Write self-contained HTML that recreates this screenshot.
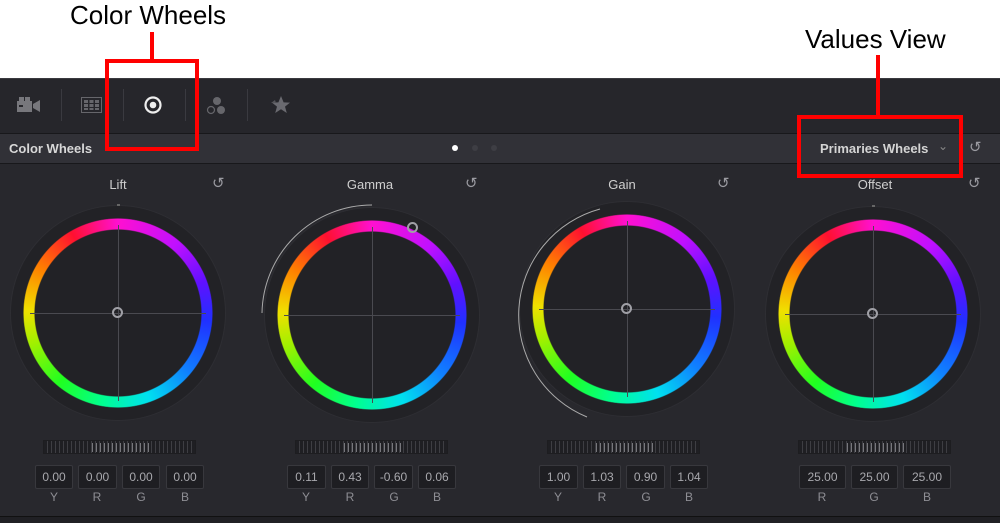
<!DOCTYPE html>
<html><head><meta charset="utf-8"><style>
*{margin:0;padding:0;box-sizing:border-box}
body{width:1000px;height:523px;background:#fff;position:relative;overflow:hidden;font-family:"Liberation Sans",sans-serif}
.a{position:absolute}
.tb{left:0;top:78px;width:1000px;height:55px;background:#26262b;border-top:1px solid #3a3a3f}
.hd{left:0;top:133px;width:1000px;height:31px;background:#313137;border-top:1px solid #18181b;border-bottom:1px solid #18181b}
.bd{left:0;top:164px;width:1000px;height:352px;background:#28282d}
.bot{left:0;top:516px;width:1000px;height:7px;background:#202024;border-top:1px solid #111}
.sep{width:1px;height:32px;top:89px;background:#3a3a40}
.ttl{color:#cfcfcf;font-size:13px;text-align:center;width:120px}
.wo{border-radius:50%;background:#222226;box-shadow:0 0 0 1px #2e2e33}
.ring{border-radius:50%;background:conic-gradient(#ff10d0 0deg,#c010ff 40deg,#6010ff 70deg,#2030ff 95deg,#1080ff 130deg,#00e0f0 160deg,#00ff90 190deg,#20ff20 220deg,#a0f000 250deg,#f0e000 272deg,#ff8000 300deg,#ff1030 330deg,#ff10d0 360deg);-webkit-mask:radial-gradient(circle,transparent 83px,#000 84px,#000 94px,transparent 95px);mask:radial-gradient(circle,transparent 83px,#000 84px,#000 94px,transparent 95px)}
.ch{background:#4a4a50}
.dot{width:11px;height:11px;border:2px solid #a0a0a6;border-radius:50%}
.sl{height:14px;background:#1f1f23 repeating-linear-gradient(90deg,#1f1f23 0 3px,#3e3e43 3px 4px);border:1px solid #1d1d20}
.sl::after{content:"";position:absolute;left:30%;width:40%;top:2px;height:9px;background:repeating-linear-gradient(90deg,transparent 0 3px,#77777c 3px 4px)}
.vb{height:24px;background:#1e1e22;border:1px solid #38383d;border-radius:2px;color:#a8a8ad;font-size:12px;text-align:center;line-height:22px}
.lb{color:#8e8e94;font-size:12px;text-align:center;width:20px}
.rs{color:#9a9aa0;font-size:15px}
.red{border:4px solid #f00}
</style></head><body>
<div class="a" style="left:70px;top:0;font-size:26px;color:#000">Color Wheels</div>
<div class="a" style="left:805px;top:24px;font-size:26px;color:#000">Values View</div>
<div class="a tb"></div>
<div class="a hd"></div>
<div class="a bd"></div>
<div class="a bot"></div>
<svg class="a" style="left:16px;top:96px" width="26" height="18" viewBox="0 0 26 18"><rect x="1" y="5" width="15" height="11" fill="#77777c"/><rect x="3" y="1" width="5" height="4" fill="#77777c"/><rect x="9" y="1" width="5" height="4" fill="#77777c"/><polygon points="17,8 24,4 24,16 17,12" fill="#77777c"/><rect x="3" y="9" width="4" height="2" fill="#26262b"/></svg>
<div class="a sep" style="left:61px"></div>
<svg class="a" style="left:81px;top:97px" width="21" height="16"><rect x="0.5" y="0.5" width="20" height="15" fill="none" stroke="#66666b"/><g fill="#66666b"><rect x="3" y="3" width="4" height="3"/><rect x="8.5" y="3" width="4" height="3"/><rect x="14" y="3" width="4" height="3"/><rect x="3" y="7" width="4" height="3"/><rect x="8.5" y="7" width="4" height="3"/><rect x="14" y="7" width="4" height="3"/><rect x="3" y="11" width="4" height="2"/><rect x="8.5" y="11" width="4" height="2"/><rect x="14" y="11" width="4" height="2"/></g></svg>
<div class="a sep" style="left:123px"></div>
<svg class="a" style="left:143px;top:95px" width="20" height="20"><circle cx="10" cy="10" r="7.5" fill="none" stroke="#eee" stroke-width="2.2"/><circle cx="10" cy="10" r="3.3" fill="#eee"/></svg>
<div class="a sep" style="left:185px"></div>
<svg class="a" style="left:205px;top:96px" width="22" height="20"><circle cx="12" cy="5" r="4" fill="#66666b"/><circle cx="6" cy="14" r="3.5" fill="none" stroke="#66666b" stroke-width="1.2"/><circle cx="16" cy="14" r="4" fill="#66666b"/></svg>
<div class="a sep" style="left:247px"></div>
<svg class="a" style="left:267px;top:95px" width="24" height="20"><polygon points="14,1 16.6,7.4 23,7.6 18,11.6 19.8,18 14,14.3 8.2,18 10,11.6 5,7.6 11.4,7.4" fill="#6a6a70"/><polygon points="8,5 9,8 4,8" fill="#55555a"/></svg>
<div class="a" style="left:9px;top:141px;color:#d8d8d8;font-size:13px;font-weight:bold">Color Wheels</div>
<div class="a" style="left:452px;top:145px;width:6px;height:6px;border-radius:50%;background:#fff"></div>
<div class="a" style="left:472px;top:145px;width:6px;height:6px;border-radius:50%;background:#3e3e44"></div>
<div class="a" style="left:491px;top:145px;width:6px;height:6px;border-radius:50%;background:#3e3e44"></div>
<div class="a" style="left:820px;top:141px;color:#d4d4d4;font-size:13px;font-weight:bold">Primaries Wheels</div>
<div class="a" style="left:938px;top:139px;color:#888;font-size:12px">⌄</div>
<div class="a" style="left:962px;top:133px;width:1px;height:31px;background:#18181b"></div>
<div class="a rs" style="left:969px;top:138px">↺</div>
<div class="a ttl" style="left:58px;top:177px">Lift</div>
<div class="a ttl" style="left:310px;top:177px">Gamma</div>
<div class="a ttl" style="left:562px;top:177px">Gain</div>
<div class="a ttl" style="left:815px;top:177px">Offset</div>
<div class="a rs" style="left:212px;top:174px">↺</div>
<div class="a rs" style="left:465px;top:174px">↺</div>
<div class="a rs" style="left:717px;top:174px">↺</div>
<div class="a rs" style="left:968px;top:174px">↺</div>

<div class="a wo" style="left:11px;top:206px;width:214px;height:214px"></div>
<div class="a ring" style="left:23px;top:218px;width:190px;height:190px"></div>
<div class="a ch" style="left:30px;top:313px;width:176px;height:1px"></div>
<div class="a ch" style="left:118px;top:225px;width:1px;height:176px"></div>
<div class="a dot" style="left:112px;top:307px"></div>
<div class="a" style="left:117px;top:204px;width:3px;height:2px;background:#666"></div>

<div class="a wo" style="left:265px;top:208px;width:214px;height:214px"></div>
<div class="a ring" style="left:277px;top:220px;width:190px;height:190px"></div>
<div class="a ch" style="left:284px;top:315px;width:176px;height:1px"></div>
<div class="a ch" style="left:372px;top:227px;width:1px;height:176px"></div>
<div class="a dot" style="left:407px;top:222px"></div>
<svg class="a" style="left:255px;top:198px" width="240" height="240"><path d="M117 7 A110 110 0 0 0 7 115" fill="none" stroke="#aaa" stroke-width="1"/></svg>

<div class="a wo" style="left:520px;top:202px;width:214px;height:214px"></div>
<div class="a ring" style="left:532px;top:214px;width:190px;height:190px"></div>
<div class="a ch" style="left:539px;top:309px;width:176px;height:1px"></div>
<div class="a ch" style="left:627px;top:221px;width:1px;height:176px"></div>
<div class="a dot" style="left:621px;top:303px"></div>
<svg class="a" style="left:507px;top:189px" width="240" height="240"><path d="M93 20 A110 110 0 0 0 80 228" fill="none" stroke="#aaa" stroke-width="1"/></svg>

<div class="a wo" style="left:766px;top:207px;width:214px;height:214px"></div>
<div class="a ring" style="left:778px;top:219px;width:190px;height:190px"></div>
<div class="a ch" style="left:785px;top:314px;width:176px;height:1px"></div>
<div class="a ch" style="left:873px;top:226px;width:1px;height:176px"></div>
<div class="a dot" style="left:867px;top:308px"></div>
<div class="a" style="left:872px;top:205px;width:3px;height:2px;background:#666"></div>

<div class="a sl" style="left:43px;top:440px;width:153px"></div>
<div class="a sl" style="left:295px;top:440px;width:153px"></div>
<div class="a sl" style="left:547px;top:440px;width:153px"></div>
<div class="a sl" style="left:798px;top:440px;width:153px"></div>

<div class="a vb" style="left:35px;top:465px;width:38px">0.00</div>
<div class="a vb" style="left:78px;top:465px;width:39px">0.00</div>
<div class="a vb" style="left:122px;top:465px;width:38px">0.00</div>
<div class="a vb" style="left:166px;top:465px;width:38px">0.00</div>
<div class="a lb" style="left:44px;top:490px">Y</div><div class="a lb" style="left:87px;top:490px">R</div><div class="a lb" style="left:131px;top:490px">G</div><div class="a lb" style="left:175px;top:490px">B</div>
<div class="a vb" style="left:287px;top:465px;width:39px">0.11</div>
<div class="a vb" style="left:331px;top:465px;width:38px">0.43</div>
<div class="a vb" style="left:374px;top:465px;width:39px">-0.60</div>
<div class="a vb" style="left:418px;top:465px;width:38px">0.06</div>
<div class="a lb" style="left:296px;top:490px">Y</div><div class="a lb" style="left:340px;top:490px">R</div><div class="a lb" style="left:384px;top:490px">G</div><div class="a lb" style="left:427px;top:490px">B</div>
<div class="a vb" style="left:539px;top:465px;width:39px">1.00</div>
<div class="a vb" style="left:583px;top:465px;width:38px">1.03</div>
<div class="a vb" style="left:626px;top:465px;width:39px">0.90</div>
<div class="a vb" style="left:670px;top:465px;width:38px">1.04</div>
<div class="a lb" style="left:548px;top:490px">Y</div><div class="a lb" style="left:592px;top:490px">R</div><div class="a lb" style="left:636px;top:490px">G</div><div class="a lb" style="left:679px;top:490px">B</div>
<div class="a vb" style="left:799px;top:465px;width:47px">25.00</div>
<div class="a vb" style="left:851px;top:465px;width:47px">25.00</div>
<div class="a vb" style="left:903px;top:465px;width:48px">25.00</div>
<div class="a lb" style="left:812px;top:490px">R</div><div class="a lb" style="left:864px;top:490px">G</div><div class="a lb" style="left:917px;top:490px">B</div>

<div class="a" style="left:150px;top:32px;width:4px;height:29px;background:#f00"></div>
<div class="a red" style="left:105px;top:59px;width:94px;height:92px"></div>
<div class="a" style="left:876px;top:55px;width:4px;height:62px;background:#f00"></div>
<div class="a red" style="left:797px;top:115px;width:166px;height:63px"></div>
</body></html>
